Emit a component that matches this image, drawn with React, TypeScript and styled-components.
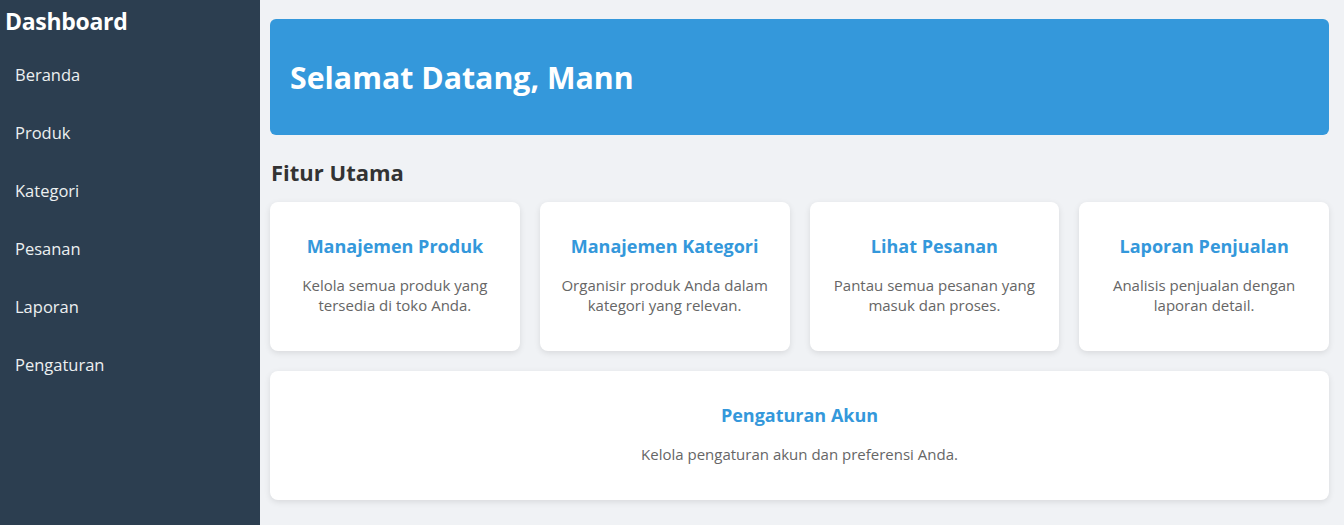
import React from "react";
import styled, { createGlobalStyle } from "styled-components";

const GlobalStyle = createGlobalStyle`
  html, body {
    margin: 0;
    padding: 0;
    height: 100%;
  }
  body {
    font-family: "Open Sans", "Noto Sans", Arial, sans-serif;
    background: #f0f2f5;
  }
  #root { height: 100%; }
  * { box-sizing: border-box; }
`;

const Layout = styled.div`
  display: flex;
  min-height: 525px;
`;

const Sidebar = styled.aside`
  width: 260px;
  flex-shrink: 0;
  background: #2c3e50;
  color: #ecf0f1;
  padding: 5px 5px;
`;

const Brand = styled.h2`
  margin: 0 0 8px 0;
  font-size: 23px;
  line-height: 32px;
  font-weight: 700;
  color: #ffffff;
  letter-spacing: -0.3px;
`;

const NavList = styled.ul`
  list-style: none;
  margin: 0;
  padding: 0;
`;

const NavItem = styled.li`
  height: 58px;
  display: flex;
  align-items: center;
  padding: 0 10px;
  font-size: 16.5px;
  color: #ecf0f1;
`;

const Main = styled.main`
  flex: 1;
  padding: 19px 15px 25px 10px;
`;

const Banner = styled.section`
  height: 116px;
  display: flex;
  align-items: center;
  padding: 0 20px 2px;
  background: #3498db;
  border-radius: 6px;
  color: #ffffff;
`;

const BannerTitle = styled.h1`
  margin: 0;
  font-size: 30.3px;
  font-weight: 700;
  line-height: 40px;
  transform: translateY(2px);
`;

const SectionTitle = styled.h2`
  margin: 23px 0 16px 1px;
  font-size: 22px;
  line-height: 28px;
  font-weight: 700;
  color: #333333;
`;

const Grid = styled.div`
  display: grid;
  grid-template-columns: repeat(4, 1fr);
  gap: 20px;
`;

const Card = styled.div<{ $wide?: boolean }>`
  grid-column: ${(p) => (p.$wide ? "1 / -1" : "auto")};
  background: #ffffff;
  border-radius: 8px;
  box-shadow: 0 2px 6px rgba(0, 0, 0, 0.1);
  padding: 20px 20px;
  text-align: center;
`;

const CardTitle = styled.h3`
  margin: 12px 0 17px;
  font-size: 18px;
  line-height: 24px;
  font-weight: 700;
  color: #3498db;
`;

const CardText = styled.p`
  margin: 0 0 16px;
  font-size: 15px;
  line-height: 20px;
  color: #666666;
`;

const navItems = ["Beranda", "Produk", "Kategori", "Pesanan", "Laporan", "Pengaturan"];

const features = [
  { title: "Manajemen Produk", text: "Kelola semua produk yang tersedia di toko Anda." },
  { title: "Manajemen Kategori", text: "Organisir produk Anda dalam kategori yang relevan." },
  { title: "Lihat Pesanan", text: "Pantau semua pesanan yang masuk dan proses." },
  { title: "Laporan Penjualan", text: "Analisis penjualan dengan laporan detail." },
];

export default function App() {
  return (
    <>
      <GlobalStyle />
      <Layout>
        <Sidebar>
          <Brand>Dashboard</Brand>
          <NavList>
            {navItems.map((n) => (
              <NavItem key={n}>{n}</NavItem>
            ))}
          </NavList>
        </Sidebar>
        <Main>
          <Banner>
            <BannerTitle>Selamat Datang, Mann</BannerTitle>
          </Banner>
          <SectionTitle>Fitur Utama</SectionTitle>
          <Grid>
            {features.map((f) => (
              <Card key={f.title}>
                <CardTitle>{f.title}</CardTitle>
                <CardText>{f.text}</CardText>
              </Card>
            ))}
            <Card $wide>
              <CardTitle>Pengaturan Akun</CardTitle>
              <CardText>Kelola pengaturan akun dan preferensi Anda.</CardText>
            </Card>
          </Grid>
        </Main>
      </Layout>
    </>
  );
}
